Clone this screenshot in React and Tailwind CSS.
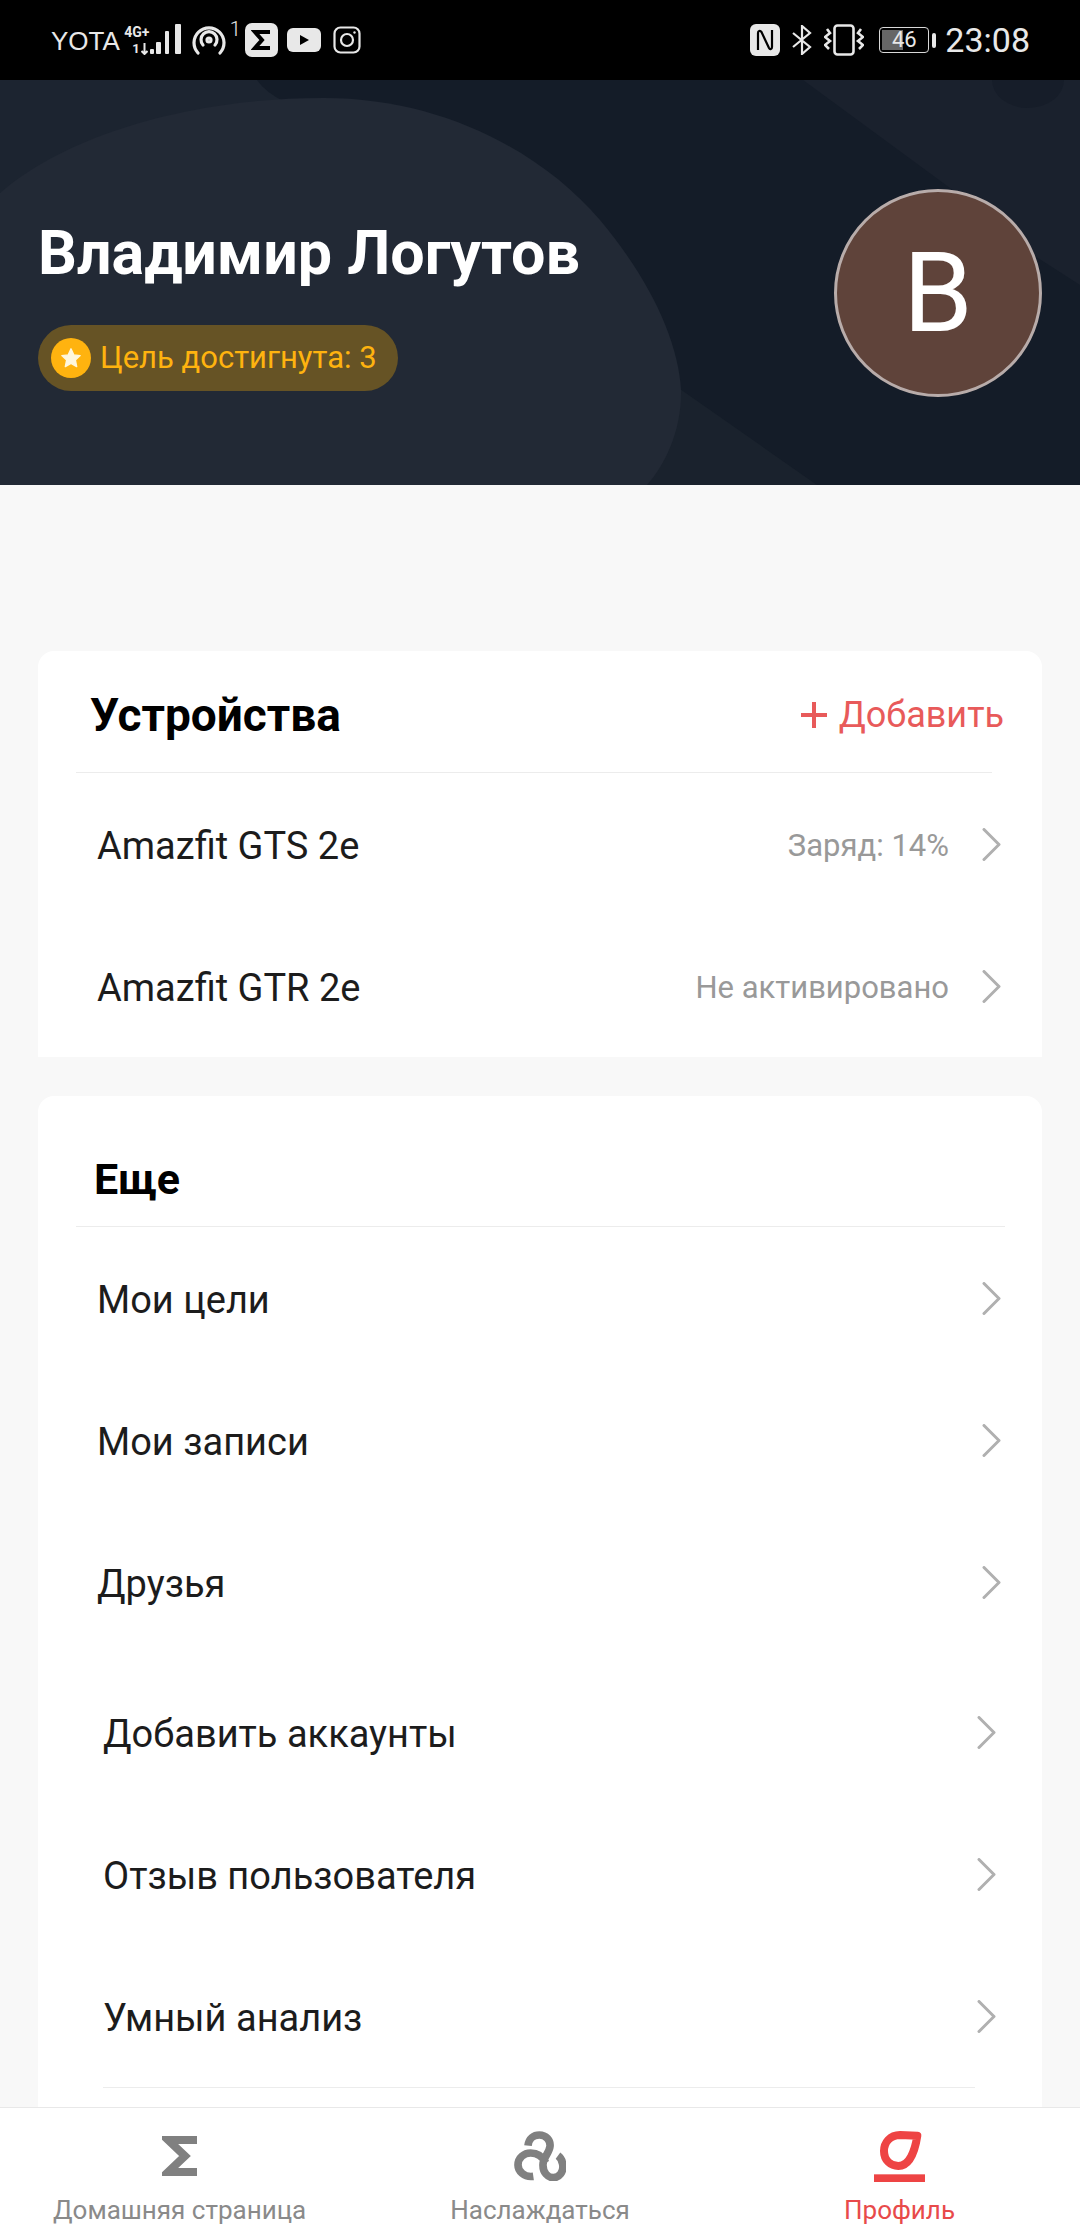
const Chevron = () => (
  <svg width="19" height="33" viewBox="0 0 19 33" fill="none" className="shrink-0">
    <path d="M2 1.5 L17 16.5 L2 31.5" stroke="#b0b0b0" strokeWidth="3" strokeLinecap="round" strokeLinejoin="round" />
  </svg>
);

const Row = ({ label, value, inset }) => (
  <div className={`flex h-[142px] items-center justify-between ${inset ? "pl-[65px] pr-[46px]" : "pl-[59px] pr-[41px]"}`}>
    <span className="pt-[3px] text-[38px] leading-none text-[#1c1c1c]">{label}</span>
    <div className="flex items-center gap-[33px]">
      {value && <span className="pt-[2px] text-[31px] leading-none text-[#999999]">{value}</span>}
      <Chevron />
    </div>
  </div>
);

const StatusBar = () => (
  <div className="flex h-[80px] shrink-0 items-center justify-between bg-black pl-[51px] pr-[50px] text-[#e8e8e8]">
    <div className="flex items-center">
      <span className="mt-[2px] font-['Liberation_Sans',sans-serif] text-[26px] leading-none">YOTA</span>
      <div className="ml-[4px] flex h-[34px] items-end">
        <div className="flex w-[26px] flex-col items-center justify-between self-stretch py-[2px] font-bold">
          <span className="text-[14px] leading-[14px]">4G+</span>
          <div className="flex items-center gap-[1px] pl-[6px]">
            <span className="text-[13px] leading-[13px]">1</span>
            <svg width="7" height="12" viewBox="0 0 7 12" fill="none" stroke="#e8e8e8" strokeWidth="2"><path d="M3.5 0 V11 M0.5 8 L3.5 11 L6.5 8" /></svg>
          </div>
        </div>
        <svg width="32" height="32" viewBox="0 0 32 32" fill="#e8e8e8" className="mb-[2px]">
          <rect x="0" y="26" width="4" height="5" rx="1" />
          <rect x="6" y="19" width="5" height="12" rx="1" />
          <rect x="15" y="8" width="4" height="23" rx="1" />
          <rect x="25" y="1" width="6" height="30" rx="1" />
        </svg>
      </div>
      <svg width="34" height="30" viewBox="0 0 34 30" fill="none" stroke="#e8e8e8" strokeWidth="3.2" strokeLinecap="round" className="ml-[10px]">
        <path d="M6 28 A15 15 0 1 1 28 28" />
        <path d="M11 20 A8 8 0 1 1 23 20" />
        <circle cx="17" cy="15" r="2" />
      </svg>
      <span className="mb-[22px] ml-[4px] w-[15px] text-[20px] leading-none font-light">1</span>
      <div className="flex h-[34px] w-[33px] items-center justify-center rounded-[7px] bg-[#e8e8e8]">
        <svg width="20" height="22" viewBox="0 0 20 22" fill="none" stroke="#000" strokeWidth="4"><path d="M19 3 H4 L11 11 L4 19 H19" /></svg>
      </div>
      <svg width="34" height="24" viewBox="0 0 34 24" className="ml-[9px]"><rect width="34" height="24" rx="6" fill="#e8e8e8" /><path d="M13 7 L22 12 L13 17 Z" fill="#000" /></svg>
      <svg width="28" height="28" viewBox="0 0 28 28" fill="none" stroke="#e8e8e8" strokeWidth="2.2" className="ml-[12px]">
        <rect x="1.5" y="1.5" width="25" height="25" rx="6" />
        <circle cx="14" cy="14" r="6" />
        <circle cx="21.5" cy="6.5" r="1.2" fill="#e8e8e8" stroke="none" />
      </svg>
    </div>
    <div className="flex items-center">
      <svg width="30" height="32" viewBox="0 0 30 32">
        <rect width="30" height="32" rx="6" fill="#e8e8e8" />
        <path d="M8 26 V9 C8 7 10 6 11.5 8 L19 24 C20 26 22 25 22 23 V6" fill="none" stroke="#000" strokeWidth="2.2" />
      </svg>
      <svg width="20" height="30" viewBox="0 0 20 30" fill="none" stroke="#e8e8e8" strokeWidth="2.2" className="ml-[12px]">
        <path d="M1 8 L18 22 L10 29 V1 L18 8 L1 22" />
      </svg>
      <svg width="40" height="32" viewBox="0 0 40 32" fill="none" stroke="#e8e8e8" strokeWidth="2.6" className="ml-[12px]">
        <rect x="10.5" y="1.5" width="19" height="29" rx="3" />
        <path d="M3 5 L6 9 L1 13 L6 17 L1 21 L5 25" />
        <path d="M37 5 L34 9 L39 13 L34 17 L39 21 L35 25" />
      </svg>
      <div className="relative ml-[15px] flex h-[26px] w-[50px] items-center justify-center overflow-hidden rounded-[4px] border-[1.5px] border-[#d8d8d8]">
        <div className="absolute inset-y-[2px] left-[2px] w-[21px] bg-[#666666]" />
        <span className="relative text-[22px] leading-none">46</span>
      </div>
      <div className="ml-[3px] h-[15px] w-[4px] rounded-[2px] bg-[#e8e8e8]" />
      <span className="ml-[9px] text-[34px] leading-none">23:08</span>
    </div>
  </div>
);

const Header = () => (
  <div className="relative flex h-[405px] shrink-0 items-center justify-between overflow-hidden bg-[#141c28] px-[38px]">
    <svg className="absolute inset-0" width="1080" height="405" viewBox="0 0 1080 405">
      <path d="M0 0 H257 Q265 12 285 22 L0 113 Z" fill="#1c2430" />
      <path d="M803 0 L950 108 L1010 160 L1080 205 V0 Z" fill="#1a212d" />
      <ellipse cx="1028" cy="0" rx="36" ry="28" fill="#161d29" />
      <path d="M660 295 L817 405 H620 Z" fill="#1a222d" />
      <path d="M0 113 C60 60 180 18 324 18 C440 18 540 70 600 140 C650 200 678 260 681 310 C682 350 665 385 647 405 H0 Z" fill="#222935" />
    </svg>
    <div className="relative mt-[48px] flex flex-col items-start gap-[41px]">
      <h1 className="text-[61px] leading-none font-bold text-white">Владимир Логутов</h1>
      <div className="flex h-[66px] w-[360px] items-center gap-[9px] rounded-full bg-[#665325] pl-[13px]">
        <div className="flex size-[40px] items-center justify-center rounded-full bg-[#ffb30f]">
          <svg width="22" height="22" viewBox="0 0 24 24"><path d="M12 2 L15 8.6 L22 9.4 L16.8 14.2 L18.2 21.4 L12 17.8 L5.8 21.4 L7.2 14.2 L2 9.4 L9 8.6 Z" fill="#fff7dd" stroke="#fff7dd" strokeWidth="1.5" strokeLinejoin="round" /></svg>
        </div>
        <span className="text-[31px] leading-none text-[#ffb30f]">Цель достигнута: 3</span>
      </div>
    </div>
    <div className="relative mt-[21px] flex size-[208px] items-center justify-center rounded-full border-[3px] border-[#b8acaa] bg-[#5f433a]">
      <span className="text-[112px] leading-none font-normal text-white">В</span>
    </div>
  </div>
);

const NavItem = ({ icon, label, active }) => (
  <div className="flex flex-col items-center">
    <div className="flex h-[52px] items-center justify-center">{icon}</div>
    <span className={`mt-[15px] text-[26px] leading-none ${active ? "text-[#e84a4a]" : "text-[#8a8a8a]"}`}>{label}</span>
  </div>
);

const BottomNav = () => (
  <div className="grid h-[133px] shrink-0 grid-cols-3 border-t border-[#e8e8e8] bg-white pt-[22px]">
    <div className="flex justify-start pl-[53px]">
      <NavItem
        label="Домашняя страница"
        icon={
          <svg width="35" height="40" viewBox="0 0 35 40" fill="none" stroke="#808080" strokeWidth="8"><path d="M35 4 H6 L23 20 L6 36 H35" /></svg>
        }
      />
    </div>
    <div className="flex justify-center">
      <NavItem
        label="Наслаждаться"
        icon={
          <svg width="52" height="50" viewBox="40 30 156 150" fill="none" stroke="#808080" strokeWidth="23"><path d="M82 74 C84 52 100 42 116 42 C136 42 150 58 148 76 C146 96 128 108 127 130 C126 155 142 170 158 170 C176 170 190 152 186 130 C185 120 180 110 172 104" /><path d="M98 166 C70 170 52 150 52 132 C52 110 70 96 90 96 C110 96 125 105 135 125" /></svg>
        }
      />
    </div>
    <div className="flex justify-end pr-[125px]">
      <NavItem
        active
        label="Профиль"
        icon={
          <svg width="51" height="51" viewBox="42 30 153 153"><path d="M172 44 L120 42 C90 42 72 65 72 90 C72 118 92 135 115 135 C148 135 165 90 172 44 Z" fill="none" stroke="#ee4444" strokeWidth="24" strokeLinejoin="round" /><rect x="42" y="160" width="153" height="23" fill="#ee4444" /></svg>
        }
      />
    </div>
  </div>
);

export default function App() {
  return (
    <div className="flex h-[2240px] w-[1080px] flex-col overflow-hidden bg-[#f8f8f8] font-['Roboto','Noto_Sans',sans-serif]">
      <StatusBar />
      <Header />
      <main className="min-h-0 flex-1 overflow-hidden px-[38px] pt-[166px]">
        <section className="h-[406px] rounded-t-[16px] bg-white">
          <div className="flex h-[121px] items-center justify-between pt-[6px] pr-[38px] pl-[52px]">
            <h2 className="text-[46px] leading-none font-bold text-black">Устройства</h2>
            <div className="flex items-center gap-[12px] text-[#e85a5a]">
              <svg width="26" height="26" viewBox="0 0 26 26" stroke="currentColor" strokeWidth="4"><path d="M13 0 V26 M0 13 H26" /></svg>
              <span className="text-[36px] leading-none">Добавить</span>
            </div>
          </div>
          <div className="mr-[50px] ml-[38px] h-[1px] bg-[#ececec]" />
          <Row label="Amazfit GTS 2e" value="Заряд: 14%" />
          <Row label="Amazfit GTR 2e" value="Не активировано" />
        </section>
        <section className="mt-[39px] rounded-t-[16px] bg-white pb-[40px]">
          <div className="flex h-[130px] items-center pt-[36px] pl-[56px]">
            <h2 className="text-[43px] leading-none font-bold text-black">Еще</h2>
          </div>
          <div className="mr-[37px] ml-[38px] h-[1px] bg-[#ececec]" />
          <div>
            <Row label="Мои цели" />
            <Row label="Мои записи" />
            <Row label="Друзья" />
            <div className="h-[8px]" />
            <Row inset label="Добавить аккаунты" />
            <Row inset label="Отзыв пользователя" />
            <Row inset label="Умный анализ" />
          </div>
          <div className="mr-[67px] ml-[65px] h-[1px] bg-[#ececec]" />
        </section>
      </main>
      <BottomNav />
    </div>
  );
}
